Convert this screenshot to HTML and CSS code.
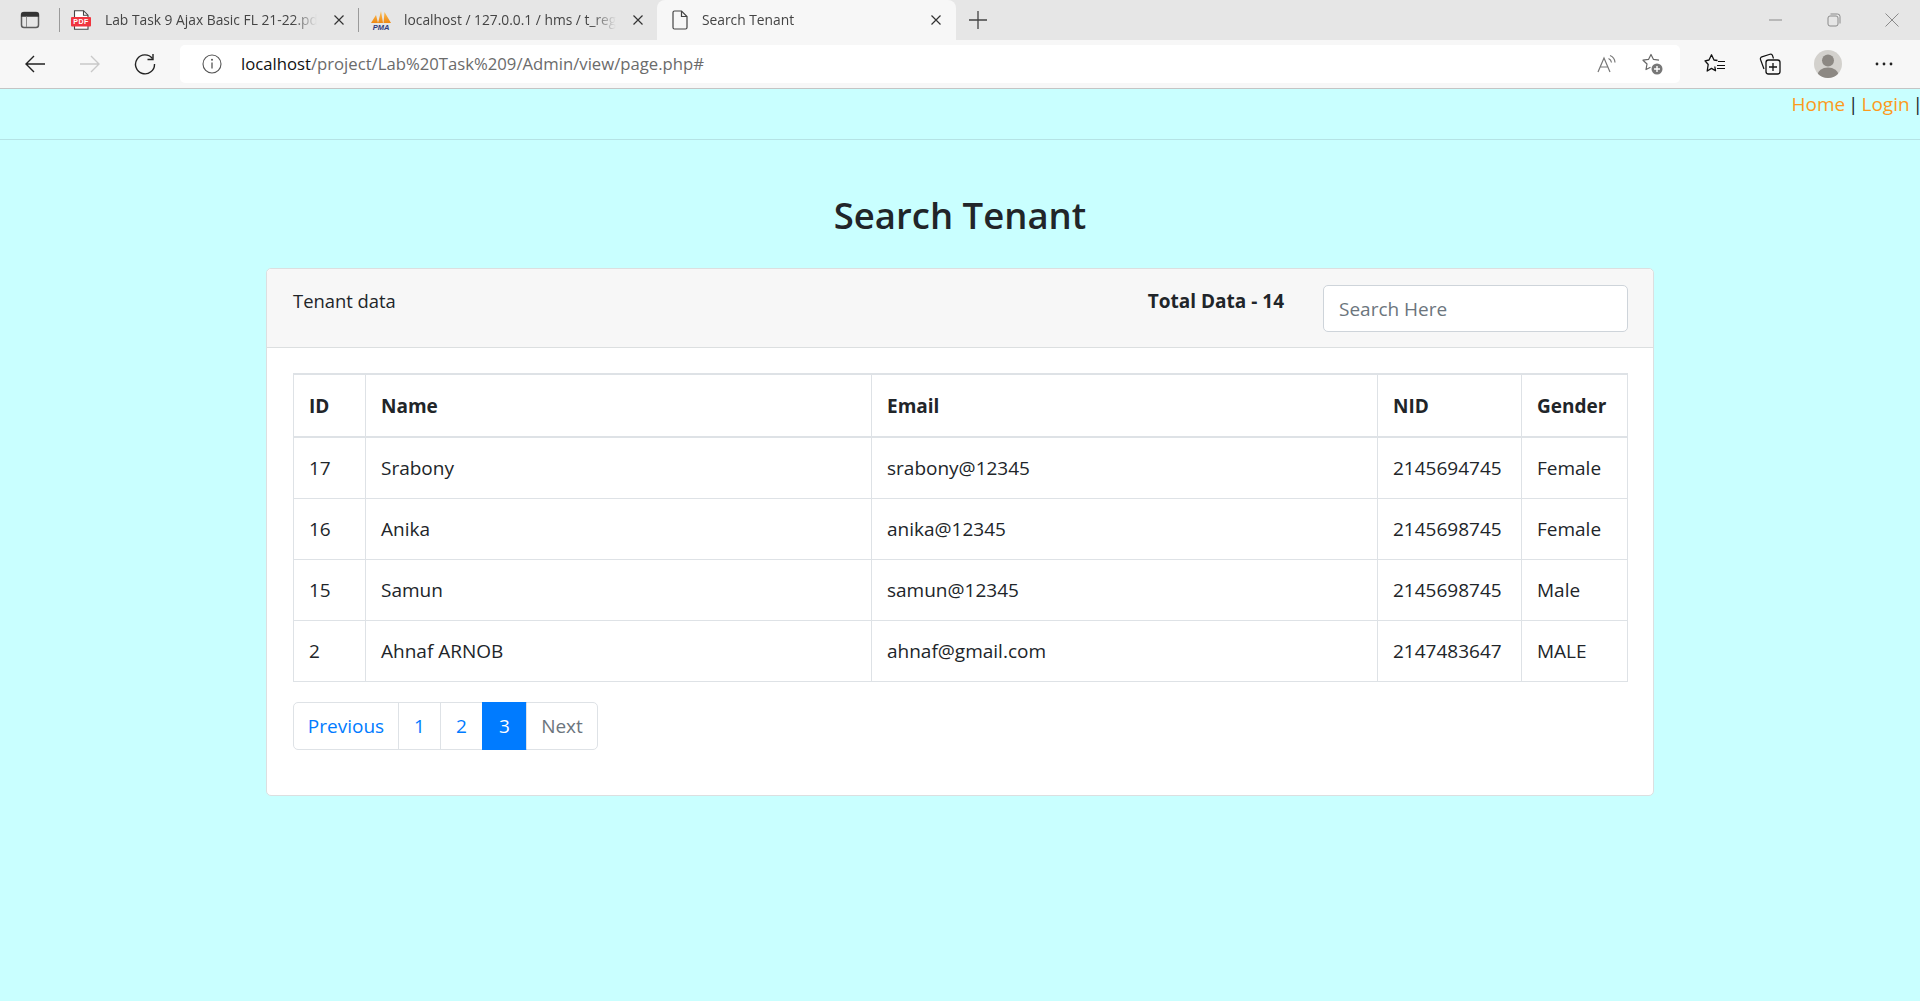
FILE: index.html
```html
<!DOCTYPE html>
<html lang="en">
<head>
    <meta charset="UTF-8">
    <title>Search Tenant</title>
    <link rel="stylesheet" href="styles.css">
</head>
<body>
    <div class="tabstrip">
        <div class="tab-menu">
            <svg width="20" height="18" viewBox="0 0 20 18"><rect x="1.500" y="1.500" width="17" height="15" rx="2.500" fill="none" stroke="#5c5c5c" stroke-width="1.500"/><path d="M1 4a3 3 0 0 1 3-3h12a3 3 0 0 1 3 3v1.800H1z" fill="#333"/><path d="M6.500 5.500v10.500" stroke="#8a8a8a" stroke-width="1"/></svg>
        </div>
        <span class="tab-sep"></span>
        <div class="tab tab-pdf">
            <svg class="tab-icon" width="20" height="20" viewBox="0 0 20 20"><path d="M3.500.7h9l4.500 4.500v14.100h-13.500z" fill="#fff" stroke="#444" stroke-width="1.100"/><path d="M12.500.7v4.500h4.500" fill="none" stroke="#444" stroke-width="1.100"/><rect x="0" y="7" width="20" height="9.500" rx="1" fill="#f0353f"/><text x="10" y="14.300" class="pdf-text">PDF</text></svg>
            <span class="tab-title">Lab Task 9 Ajax Basic FL 21-22.pdf</span>
            <svg class="tab-close" width="12" height="12" viewBox="0 0 12 12"><path d="M1.500 1.500l9 9M10.500 1.500l-9 9" stroke="#333" stroke-width="1.200"/></svg>
        </div>
        <span class="tab-sep"></span>
        <div class="tab tab-pma">
            <svg class="tab-icon" width="22" height="20" viewBox="0 0 22 20"><defs><linearGradient id="sail" x1="0" y1="0" x2="0" y2="1"><stop offset="0" stop-color="#fbc25a"/><stop offset="1" stop-color="#ee8712"/></linearGradient></defs><path d="M1 13L6 5l2 8zM8 13L11 1l2 12zM13.500 13L14.500 2 21 13z" fill="url(#sail)"/><text x="11" y="19.500" class="pma-text">PMA</text></svg>
            <span class="tab-title">localhost / 127.0.0.1 / hms / t_register</span>
            <svg class="tab-close" width="12" height="12" viewBox="0 0 12 12"><path d="M1.500 1.500l9 9M10.500 1.500l-9 9" stroke="#333" stroke-width="1.200"/></svg>
        </div>
        <div class="tab tab-active">
            <svg class="tab-icon" width="16" height="20" viewBox="0 0 16 20"><path d="M1 2.500a1.500 1.500 0 0 1 1.500-1.500h7l5.500 5.500v11a1.500 1.500 0 0 1-1.500 1.500h-11a1.500 1.500 0 0 1-1.500-1.500z" fill="none" stroke="#444" stroke-width="1.200"/><path d="M9.500 1v5.500h5.500" fill="none" stroke="#444" stroke-width="1.200"/></svg>
            <span class="tab-title">Search Tenant</span>
            <svg class="tab-close" width="12" height="12" viewBox="0 0 12 12"><path d="M1.500 1.500l9 9M10.500 1.500l-9 9" stroke="#333" stroke-width="1.200"/></svg>
        </div>
        <svg class="tab-new" width="18" height="18" viewBox="0 0 18 18"><path d="M9 0v18M0 9h18" stroke="#444" stroke-width="1.300"/></svg>
        <div class="win-btns">
            <svg width="14" height="14" viewBox="0 0 14 14"><path d="M0 7h13" stroke="#8a8a8a" stroke-width="1"/></svg>
            <svg width="14" height="14" viewBox="0 0 14 14"><rect x="1" y="3" width="10" height="10" rx="2" fill="none" stroke="#8a8a8a"/><path d="M3.500 1h7a2.500 2.500 0 0 1 2.500 2.500v7" fill="none" stroke="#8a8a8a"/></svg>
            <svg width="14" height="14" viewBox="0 0 14 14"><path d="M.500.500l13 13M13.500.500l-13 13" stroke="#8a8a8a"/></svg>
        </div>
    </div>

    <div class="toolbar">
        <div class="nav-btns">
            <svg width="22" height="20" viewBox="0 0 22 20"><path d="M21 10H2M10 2l-8 8 8 8" fill="none" stroke="#222" stroke-width="1.400"/></svg>
            <svg width="22" height="20" viewBox="0 0 22 20"><path d="M1 10h19M12 2l8 8-8 8" fill="none" stroke="#c9c9c9" stroke-width="1.400"/></svg>
            <svg width="22" height="22" viewBox="0 0 22 22"><path d="M18.500 5.500A9.500 9.500 0 1 0 20.500 11" fill="none" stroke="#222" stroke-width="1.400"/><path d="M19 1v5.500h-5.500" fill="none" stroke="#222" stroke-width="1.400"/></svg>
        </div>
        <div class="addressbar">
            <svg class="info-icon" width="20" height="20" viewBox="0 0 20 20"><circle cx="10" cy="10" r="9" fill="none" stroke="#555" stroke-width="1.100"/><path d="M10 8.500v6" stroke="#555" stroke-width="1.300"/><circle cx="10" cy="5.800" r="1" fill="#555"/></svg>
            <span class="url"><span class="url-host">localhost</span>/project/Lab%20Task%209/Admin/view/page.php#</span>
            <svg class="read-icon" width="20" height="20" viewBox="0 0 20 20"><path d="M1 18L7 4l6 14M3.300 13h7.500" fill="none" stroke="#777" stroke-width="1.200"/><path d="M11.500 4.500a5 5 0 0 1 3 4M13 1.500a8 8 0 0 1 5 7" fill="none" stroke="#777" stroke-width="1.200"/></svg>
            <svg class="fav-icon" width="22" height="22" viewBox="0 0 22 22"><path d="M10.500 17.300L6 19.500l1-5.500-4-3.800 5.500-.8L11 4.500l2.500 4.900 5.500.8" fill="none" stroke="#666" stroke-width="1.200" stroke-linejoin="round" transform="translate(-1 -3)"/><circle cx="16" cy="16" r="5.500" fill="#777"/><path d="M16 13v6M13 16h6" stroke="#fff" stroke-width="1.400"/></svg>
        </div>
        <div class="tool-btns">
            <svg width="22" height="22" viewBox="0 0 22 22"><path d="M13.500 7.500L10 7 7.500 1.800 5 7l-4 .8 3.200 3.700L3.200 18l4.300-2.600 4 2.300-.7-4.200" fill="none" stroke="#111" stroke-width="1.300" stroke-linejoin="round"/><path d="M14 8.500h7M13 12.500h8M13 15.500h8" stroke="#111" stroke-width="1.200"/></svg>
            <svg width="22" height="22" viewBox="0 0 22 22"><path d="M5 16L1.500 6.500a2 2 0 0 1 1.300-2.600L11 1.300a2 2 0 0 1 2.500 1.200l1 3" fill="none" stroke="#111" stroke-width="1.200"/><rect x="7" y="7" width="14" height="14" rx="2.500" fill="#f7f7f7" stroke="#111" stroke-width="1.300"/><path d="M14 10v8M10 14h8" stroke="#111" stroke-width="1.300"/></svg>
            <svg width="28" height="28" viewBox="0 0 28 28"><defs><clipPath id="avatar"><circle cx="14" cy="14" r="14"/></clipPath></defs><circle cx="14" cy="14" r="14" fill="#d3d1cd"/><g clip-path="url(#avatar)" fill="#8c8883"><circle cx="14" cy="10.500" r="6"/><ellipse cx="14" cy="25" rx="10.500" ry="7.500"/></g></svg>
            <svg width="18" height="4" viewBox="0 0 18 4"><circle cx="2" cy="2" r="1.400" fill="#222"/><circle cx="9" cy="2" r="1.400" fill="#222"/><circle cx="16" cy="2" r="1.400" fill="#222"/></svg>
        </div>
    </div>

    <nav class="topnav">
        <a href="#">Home</a> | <a href="#">Login</a> |
    </nav>

    <main class="container">
        <h1>Search Tenant</h1>
        <div class="card">
            <div class="card-header">
                <span class="card-title">Tenant data</span>
                <b class="total">Total Data - 14</b>
                <input class="search" type="text" placeholder="Search Here">
            </div>
            <div class="card-body">
                <table>
                    <colgroup>
                        <col class="col-id"><col class="col-name"><col class="col-email"><col class="col-nid"><col class="col-gender">
                    </colgroup>
                    <thead>
                        <tr><th>ID</th><th>Name</th><th>Email</th><th>NID</th><th>Gender</th></tr>
                    </thead>
                    <tbody>
                        <tr><td>17</td><td>Srabony</td><td>srabony@12345</td><td>2145694745</td><td>Female</td></tr>
                        <tr><td>16</td><td>Anika</td><td>anika@12345</td><td>2145698745</td><td>Female</td></tr>
                        <tr><td>15</td><td>Samun</td><td>samun@12345</td><td>2145698745</td><td>Male</td></tr>
                        <tr><td>2</td><td>Ahnaf ARNOB</td><td>ahnaf@gmail.com</td><td>2147483647</td><td>MALE</td></tr>
                    </tbody>
                </table>
                <ul class="pagination">
                    <li class="page-prev"><a href="#">Previous</a></li>
                    <li class="page-num"><a href="#">1</a></li>
                    <li class="page-num"><a href="#">2</a></li>
                    <li class="page-num active"><a href="#">3</a></li>
                    <li class="page-next"><a href="#">Next</a></li>
                </ul>
            </div>
        </div>
    </main>
</body>
</html>
```

FILE: styles.css
```css
* {
    box-sizing: border-box;
}

html, body {
    height: 1001px;
    overflow: hidden;
}

body {
    margin: 0;
    background-color: #c9ffff;
    color: #212529;
    font-family: "Open Sans", "Noto Sans", sans-serif;
    font-size: 19px;
    line-height: 30px;
}

/* browser chrome */
.tabstrip {
    display: flex;
    align-items: center;
    height: 40px;
    background-color: #e6e6e6;
    font-size: 13.800px;
    color: #444;
}

.tab-menu {
    display: flex;
    justify-content: center;
    width: 59px;
}

.tab-sep {
    width: 1px;
    height: 24px;
    background-color: #9a9a9a;
}

.tab {
    display: flex;
    align-items: center;
    height: 40px;
}

.tab-pdf {
    width: 298px;
    padding: 0 13px 0 11px;
}

.tab-pma {
    width: 298px;
    padding: 0 13px 0 11px;
}

.tab-active {
    width: 299px;
    padding: 0 14px 0 15px;
    background-color: #f7f7f7;
    border-radius: 8px 8px 0 0;
}

.tab-title {
    flex: 1;
    margin-left: 13px;
    overflow: hidden;
    white-space: nowrap;
    -webkit-mask-image: linear-gradient(to left, transparent, #000 24px);
    mask-image: linear-gradient(to left, transparent, #000 24px);
}

.tab-pdf .tab-title {
    margin-left: 14px;
}

.tab-pma .tab-title {
    margin-left: 12px;
}

.tab-active .tab-title {
    margin-left: 14px;
}

.tab-close {
    margin-left: 16px;
    flex: none;
}

.tab-new {
    margin-left: 13px;
}

.pdf-text {
    fill: #fff;
    font: bold 7px "Liberation Sans", sans-serif;
    letter-spacing: .5px;
    text-anchor: middle;
}

.pma-text {
    fill: #2f3a7e;
    font: italic bold 7.500px "Liberation Sans", sans-serif;
    text-anchor: middle;
}

.win-btns {
    display: flex;
    gap: 44px;
    margin-left: auto;
    padding-right: 21px;
}

.toolbar {
    display: flex;
    align-items: center;
    height: 49px;
    background-color: #f7f7f7;
    border-bottom: 1px solid #c4c4c4;
}

.nav-btns {
    display: flex;
    align-items: center;
    gap: 33px;
    width: 180px;
    padding-left: 24px;
}

.addressbar {
    display: flex;
    align-items: center;
    width: 1500px;
    height: 38px;
    padding: 0 17px 0 22px;
    background-color: #fff;
    border-radius: 5px;
    font-size: 16.700px;
    color: #6b6b6b;
}

.url {
    flex: 1;
    margin-left: 19px;
    white-space: nowrap;
}

.url-host {
    color: #111;
}

.read-icon {
    margin-right: 24px;
}

.tool-btns {
    display: flex;
    align-items: center;
    gap: 33px;
    padding-left: 24px;
}

/* page */
.topnav {
    height: 51px;
    margin-right: -3px;
    border-bottom: 1px solid #b5e3e5;
    text-align: right;
    white-space: nowrap;
    word-spacing: -2px;
}

.topnav a {
    color: #fd9a1c;
    text-decoration: none;
}

.container {
    width: 1388px;
    margin: 0 auto;
}

h1 {
    margin: 51px 0 29px;
    font-size: 36.500px;
    font-weight: 600;
    line-height: 48px;
    text-align: center;
}

.card {
    height: 528px;
    background-color: #fff;
    border: 1px solid #dcdfe0;
    border-radius: 5px;
}

.card-header {
    display: flex;
    align-items: flex-start;
    height: 79px;
    padding: 15px 25px 15px 26px;
    background-color: #f7f7f7;
    border-bottom: 1px solid #dcdfe0;
    border-radius: 5px 5px 0 0;
}

.card-title {
    margin-top: 2px;
    font-size: 18.400px;
}

.total {
    margin-top: 2px;
    margin-left: auto;
    margin-right: 39px;
    font-weight: 700;
}

.search {
    width: 305px;
    height: 47px;
    margin-top: 1px;
    padding: 0 15px;
    border: 1px solid #ced4da;
    border-radius: 5px;
    color: #495057;
    font: inherit;
}

.search::placeholder {
    color: #6c757d;
}

.card-body {
    padding: 25px 25px 25px 26px;
}

table {
    width: 1334px;
    border-collapse: collapse;
    table-layout: fixed;
}

.col-id { width: 72px; }
.col-name { width: 506px; }
.col-email { width: 506px; }
.col-nid { width: 144px; }
.col-gender { width: 106px; }

th, td {
    height: 61px;
    padding: 15px;
    border: 1px solid #dee2e6;
    text-align: left;
    white-space: nowrap;
}

th {
    height: 63px;
    font-weight: 700;
    border-top-width: 2px;
    border-bottom-width: 2px;
}

.pagination {
    display: flex;
    margin: 20px 0 0;
    padding: 0;
    list-style: none;
}

.pagination li {
    height: 48px;
    margin-left: -1px;
    border: 1px solid #dee2e6;
    text-align: center;
    line-height: 46px;
}

.pagination a {
    display: block;
    color: #007bff;
    text-decoration: none;
}

.page-prev {
    width: 106px;
    margin-left: 0 !important;
    border-radius: 5px 0 0 5px;
}

.page-num {
    width: 43px;
}

.page-num.active {
    width: 45px;
    background-color: #007bff;
    border-color: #007bff;
}

.page-num.active a {
    color: #fff;
}

.page-next {
    width: 72px;
    border-radius: 0 5px 5px 0;
}

.page-next a {
    color: #6c757d;
}
```
